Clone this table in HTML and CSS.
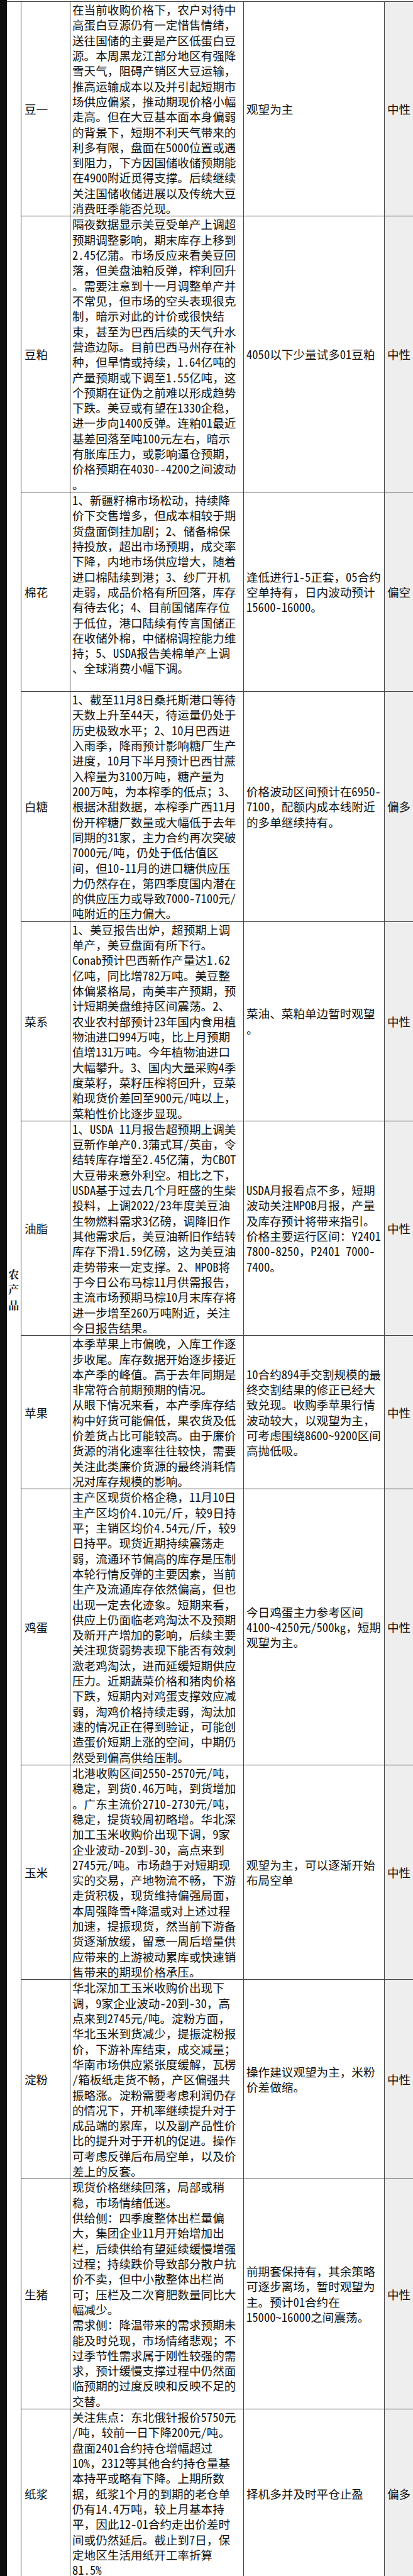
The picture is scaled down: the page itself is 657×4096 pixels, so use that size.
FILE: index.html
```html
<!DOCTYPE html>
<html lang="zh-CN">
<head>
<meta charset="utf-8">
<title>农产品策略</title>
<link rel="stylesheet" href="styles.css">
</head>
<body>
<div class="sheet">
  <div class="edge"></div>
  <table class="grid">
    <colgroup>
      <col class="c-cat"><col class="c-name"><col class="c-text"><col class="c-adv"><col class="c-rate">
    </colgroup>
    <tbody>
      <tr>
        <td class="cat" rowspan="12">农<br>产<br>品</td>
        <td class="name">豆一</td>
        <td class="text">在当前收购价格下，农户对待中<br>高蛋白豆源仍有一定惜售情绪，<br>送往国储的主要是产区低蛋白豆<br>源。本周黑龙江部分地区有强降<br>雪天气，阻碍产销区大豆运输，<br>推高运输成本以及并引起短期市<br>场供应偏紧，推动期现价格小幅<br>走高。但在大豆基本面本身偏弱<br>的背景下，短期不利天气带来的<br>利多有限，盘面在5000位置或遇<br>到阻力，下方因国储收储预期能<br>在4900附近觅得支撑。后续继续<br>关注国储收储进展以及传统大豆<br>消费旺季能否兑现。</td>
        <td class="adv">观望为主</td>
        <td class="rate">中性</td>
      </tr>
      <tr>
        <td class="name">豆粕</td>
        <td class="text">隔夜数据显示美豆受单产上调超<br>预期调整影响，期末库存上移到<br>2.45亿蒲。市场反应来看美豆回<br>落，但美盘油粕反弹，榨利回升<br>。需要注意到十一月调整单产并<br>不常见，但市场的空头表现很克<br>制，暗示对此的计价或很快结<br>束，甚至为巴西后续的天气升水<br>营造边际。目前巴西马州存在补<br>种，但旱情或持续，1.64亿吨的<br>产量预期或下调至1.55亿吨，这<br>个预期在证伪之前难以形成趋势<br>下跌。美豆或有望在1330企稳，<br>进一步向1400反弹。连粕01最近<br>基差回落至吨100元左右，暗示<br>有胀库压力，或影响逼仓预期，<br>价格预期在4030--4200之间波动<br>。</td>
        <td class="adv">4050以下少量试多01豆粕</td>
        <td class="rate">中性</td>
      </tr>
      <tr>
        <td class="name">棉花</td>
        <td class="text">1、新疆籽棉市场松动，持续降<br>价下交售增多，但成本相较于期<br>货盘面倒挂加剧；2、储备棉保<br>持投放，超出市场预期，成交率<br>下降，内地市场供应增大，随着<br>进口棉陆续到港；3、纱厂开机<br>走弱，成品价格有所回落，库存<br>有待去化；4、目前国储库存位<br>于低位，港口陆续有传言国储正<br>在收储外棉，中储棉调控能力维<br>持；5、USDA报告美棉单产上调<br>、全球消费小幅下调。<br>&nbsp;</td>
        <td class="adv">逢低进行1-5正套，05合约<br>空单持有，日内波动预计<br>15600-16000。</td>
        <td class="rate">偏空</td>
      </tr>
      <tr>
        <td class="name">白糖</td>
        <td class="text">1、截至11月8日桑托斯港口等待<br>天数上升至44天，待运量仍处于<br>历史极致水平；2、10月巴西进<br>入雨季，降雨预计影响糖厂生产<br>进度，10月下半月预计巴西甘蔗<br>入榨量为3100万吨，糖产量为<br>200万吨，为本榨季的低点；3、<br>根据沐甜数据，本榨季广西11月<br>份开榨糖厂数量或大幅低于去年<br>同期的31家，主力合约再次突破<br>7000元/吨，仍处于低估值区<br>间，但10-11月的进口糖供应压<br>力仍然存在，第四季度国内潜在<br>的供应压力或导致7000-7100元/<br>吨附近的压力偏大。</td>
        <td class="adv">价格波动区间预计在6950-<br>7100，配额内成本线附近<br>的多单继续持有。</td>
        <td class="rate">偏多</td>
      </tr>
      <tr>
        <td class="name">菜系</td>
        <td class="text">1、美豆报告出炉，超预期上调<br>单产，美豆盘面有所下行。<br>Conab预计巴西新作产量达1.62<br>亿吨，同比增782万吨。美豆整<br>体偏紧格局，南美丰产预期，预<br>计短期美盘维持区间震荡。2、<br>农业农村部预计23年国内食用植<br>物油进口994万吨，比上月预期<br>值增131万吨。今年植物油进口<br>大幅攀升。3、国内大量采购4季<br>度菜籽，菜籽压榨将回升，豆菜<br>粕现货价差回至900元/吨以上，<br>菜粕性价比逐步显现。</td>
        <td class="adv">菜油、菜粕单边暂时观望<br>。</td>
        <td class="rate">中性</td>
      </tr>
      <tr>
        <td class="name">油脂</td>
        <td class="text">1、USDA 11月报告超预期上调美<br>豆新作单产0.3蒲式耳/英亩，令<br>结转库存增至2.45亿蒲，为CBOT<br>大豆带来意外利空。相比之下，<br>USDA基于过去几个月旺盛的生柴<br>投料，上调2022/23年度美豆油<br>生物燃料需求3亿磅，调降旧作<br>其他需求后，美豆油新旧作结转<br>库存下滑1.59亿磅，这为美豆油<br>走势带来一定支撑。2、MPOB将<br>于今日公布马棕11月供需报告，<br>主流市场预期马棕10月末库存将<br>进一步增至260万吨附近，关注<br>今日报告结果。</td>
        <td class="adv">USDA月报看点不多，短期<br>波动关注MPOB月报，产量<br>及库存预计将带来指引。<br>价格主要运行区间：Y2401<br>7800-8250，P2401 7000-<br>7400。</td>
        <td class="rate">中性</td>
      </tr>
      <tr>
        <td class="name">苹果</td>
        <td class="text">本季苹果上市偏晚，入库工作逐<br>步收尾。库存数据开始逐步接近<br>本产季的峰值。高于去年同期是<br>非常符合前期预期的情况。<br>从眼下情况来看，本产季库存结<br>构中好货可能偏低，果农货及低<br>价差货占比可能较高。由于廉价<br>货源的消化速率往往较快，需要<br>关注此类廉价货源的最终消耗情<br>况对库存规模的影响。</td>
        <td class="adv">10合约894手交割规模的最<br>终交割结果的修正已经大<br>致兑现。收购季苹果行情<br>波动较大，以观望为主，<br>可考虑围绕8600~9200区间<br>高抛低吸。</td>
        <td class="rate">中性</td>
      </tr>
      <tr>
        <td class="name">鸡蛋</td>
        <td class="text">主产区现货价格企稳，11月10日<br>主产区均价4.10元/斤，较9日持<br>平；主销区均价4.54元/斤，较9<br>日持平。现货近期持续震荡走<br>弱，流通环节偏高的库存是压制<br>本轮行情反弹的主要因素，当前<br>生产及流通库存依然偏高，但也<br>出现一定去化迹象。短期来看，<br>供应上仍面临老鸡淘汰不及预期<br>及新开产增加的影响，后续主要<br>关注现货弱势表现下能否有效刺<br>激老鸡淘汰，进而延缓短期供应<br>压力。近期蔬菜价格和猪肉价格<br>下跌，短期内对鸡蛋支撑效应减<br>弱，淘鸡价格持续走弱，淘汰加<br>速的情况正在得到验证，可能创<br>造蛋价短期上涨的空间，中期仍<br>然受到偏高供给压制。</td>
        <td class="adv">今日鸡蛋主力参考区间<br>4100~4250元/500kg，短期<br>观望为主。</td>
        <td class="rate">中性</td>
      </tr>
      <tr>
        <td class="name">玉米</td>
        <td class="text">北港收购区间2550-2570元/吨，<br>稳定，到货0.46万吨，到货增加<br>。广东主流价2710-2730元/吨，<br>稳定，提货较周初略增。华北深<br>加工玉米收购价出现下调，9家<br>企业波动-20到-30，高点来到<br>2745元/吨。市场趋于对短期现<br>实的交易，产地物流不畅，下游<br>走货积极，现货维持偏强局面，<br>本周强降雪+降温或对上述过程<br>加速，提振现货，然当前下游备<br>货逐渐放缓，留意一周后增量供<br>应带来的上游被动累库或快速销<br>售带来的期现价格承压。</td>
        <td class="adv">观望为主，可以逐渐开始<br>布局空单</td>
        <td class="rate">中性</td>
      </tr>
      <tr>
        <td class="name">淀粉</td>
        <td class="text">华北深加工玉米收购价出现下<br>调，9家企业波动-20到-30，高<br>点来到2745元/吨。淀粉方面，<br>华北玉米到货减少，提振淀粉报<br>价，下游补库结束，成交减量；<br>华南市场供应紧张度缓解，瓦楞<br>/箱板纸走货不畅，产区偏强共<br>振略涨。淀粉需要考虑利润仍存<br>的情况下，开机率继续提升对于<br>成品端的累库，以及副产品性价<br>比的提升对于开机的促进。操作<br>可考虑反弹后布局空单，以及价<br>差上的反套。</td>
        <td class="adv">操作建议观望为主，米粉<br>价差做缩。</td>
        <td class="rate">中性</td>
      </tr>
      <tr>
        <td class="name">生猪</td>
        <td class="text">现货价格继续回落，局部或稍<br>稳，市场情绪低迷。<br>供给侧：四季度整体出栏量偏<br>大，集团企业11月开始增加出<br>栏，后续供给有望延续缓慢增强<br>过程；持续跌价导致部分散户抗<br>价不卖，但中小散整体出栏尚<br>可；压栏及二次育肥数量同比大<br>幅减少。<br>需求侧：降温带来的需求预期未<br>能及时兑现，市场情绪悲观；不<br>过季节性需求属于刚性较强的需<br>求，预计缓慢支撑过程中仍然面<br>临预期的过度反映和反映不足的<br>交替。</td>
        <td class="adv">前期套保持有，其余策略<br>可逐步离场，暂时观望为<br>主。预计01合约在<br>15000~16000之间震荡。</td>
        <td class="rate">中性</td>
      </tr>
      <tr>
        <td class="name">纸浆</td>
        <td class="text">关注焦点：东北俄针报价5750元<br>/吨，较前一日下降200元/吨。<br>盘面2401合约持仓增幅超过<br>10%，2312等其他合约持仓量基<br>本持平或略有下降。上期所数<br>据，纸浆1个月的到期的老仓单<br>仍有14.4万吨，较上月基本持<br>平，因此12-01合约走出价差时<br>间或仍然延后。截止到7日，保<br>定地区生活用纸开工率折算<br>81.5%</td>
        <td class="adv">择机多并及时平仓止盈</td>
        <td class="rate">偏多</td>
      </tr>
    </tbody>
  </table>
</div>
</body>
</html>
```

FILE: styles.css
```css
html, body {
  margin: 0;
  padding: 0;
  background: #ffffff;
}

body {
  width: 657px;
  overflow: hidden;
  font-family: "Noto Sans Mono CJK SC", "Noto Sans CJK SC", sans-serif;
  color: #111111;
}

.sheet {
  display: flex;
  align-items: stretch;
  width: 657px;
}

.edge {
  flex: none;
  width: 10.5px;
  background: #0d0d0d;
}

.grid {
  flex: none;
  margin-top: 2px;
  border-collapse: collapse;
  table-layout: fixed;
  width: 646.5px;
  font-size: 18.6px;
  line-height: 24.32px;
}

.c-cat { width: 23px; }
.c-name { width: 78px; }
.c-text { width: 276px; }
.c-adv { width: 224px; }
.c-rate { width: 45.5px; }

.grid td {
  border: 1px solid #454545;
  padding: 0;
  vertical-align: middle;
  white-space: nowrap;
  overflow: hidden;
  text-spacing-trim: space-all;
}

.grid td.cat {
  border-left: none;
  text-align: center;
  font-family: "Noto Serif CJK SC", "Noto Sans CJK SC", serif;
  font-weight: 700;
  font-size: 17px;
  line-height: 24.6px;
  color: #1a1a1a;
}

.grid td.name {
  padding-left: 5px;
}

.grid td.text {
  vertical-align: top;
  padding-left: 3px;
}

.grid td.adv {
  padding-left: 4px;
}

.grid td.rate {
  padding-left: 4px;
  border-right: none;
  background: #eeeeee;
}
```
